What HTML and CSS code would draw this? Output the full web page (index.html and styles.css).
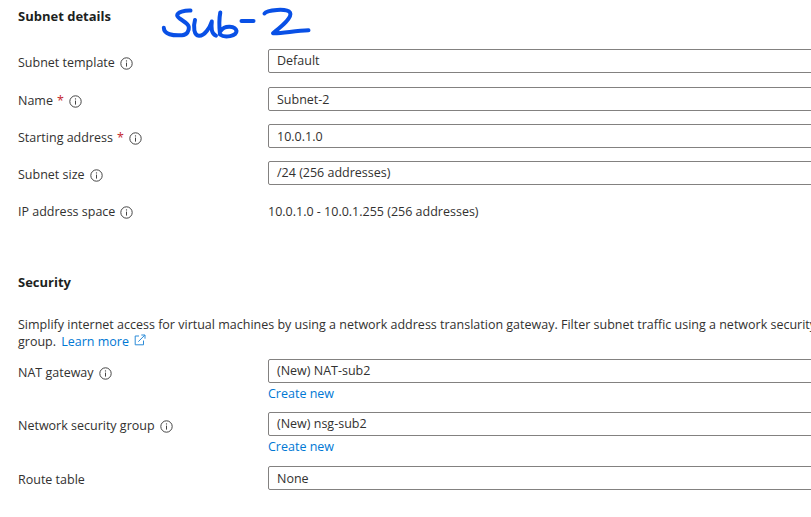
FILE: index.html
```html
<!DOCTYPE html>
<html lang="en">
<head>
<meta charset="utf-8">
<title>Subnet details</title>
<link rel="stylesheet" href="styles.css">
</head>
<body>
<svg class="defs" aria-hidden="true">
  <symbol id="info" viewBox="0 0 13 13">
    <circle cx="6.5" cy="6.5" r="5.7" fill="none" stroke="#444" stroke-width="1"/>
    <path d="M6.5 5.6V9.6" stroke="#444" stroke-width="1"/>
    <circle cx="6.5" cy="3.9" r=".65" fill="#444"/>
  </symbol>
</svg>
<main class="form">
  <header class="title">
    <h2 class="heading w-details">Subnet details</h2>
    <svg class="note" viewBox="0 0 160 40" aria-hidden="true">
      <path d="M31.5 10.6C26 10.4 18 12 18.2 15.5C18.5 19 29 22 29.8 27C30.3 31 28 35 23 35.2C14 35.8 5 34.5 4.8 27.7"/>
      <path d="M36 20C34 27 35 35.5 40 35.8C46 36 51 27 52.8 21.5C52 28 52 34 57 35.6"/>
      <path d="M61.3 12.5C60 19 60.3 28 61 34.5C66 38.5 77.5 36 77.5 31C76.500 26 66 24.500 61.500 31"/>
      <path d="M82.500 21H94.500"/>
      <path d="M105.500 13.500C108 9.800 128 8 131 12.500C134 18 119 29 114 33.200C124 33.500 136 30.500 149.500 30.300"/>
    </svg>
  </header>
  <div class="row first"><label class="label"><span class="w-template">Subnet template</span><svg class="info"><use href="#info"/></svg></label><div class="field up"><span class="w-default">Default</span></div></div>
  <div class="row name"><label class="label"><span class="w-name">Name</span><b class="req">*</b><svg class="info"><use href="#info"/></svg></label><div class="field"><span class="w-subnet">Subnet-2</span></div></div>
  <div class="row"><label class="label"><span class="w-start">Starting address</span><b class="req">*</b><svg class="info"><use href="#info"/></svg></label><div class="field"><span class="w-ip">10.0.1.0</span></div></div>
  <div class="row"><label class="label"><span class="w-size">Subnet size</span><svg class="info"><use href="#info"/></svg></label><div class="field up"><span class="w-mask">/24 (256 addresses)</span></div></div>
  <div class="row"><label class="label"><span class="w-space">IP address space</span><svg class="info"><use href="#info"/></svg></label><div class="value"><span class="w-range">10.0.1.0 - 10.0.1.255 (256 addresses)</span></div></div>
  <h2 class="heading security w-security">Security</h2>
  <p class="intro"><span class="w-intro">Simplify internet access for virtual machines by using a network address translation gateway. Filter subnet traffic using a network security</span><br><span class="w-group">group.</span> <a class="link w-learn">Learn more</a><svg class="ext" viewBox="0 0 12 12"><path d="M5 2H1.200V10.800H9.500V6.500M4.300 7.700L10.700 1.200M7.300 1H11V4.700"/></svg></p>
  <div class="row nat"><label class="label"><span class="w-nat">NAT gateway</span><svg class="info"><use href="#info"/></svg></label><div class="field up"><span class="w-natv">(New) NAT-sub2</span></div></div>
  <a class="link create"><span class="w-create">Create new</span></a>
  <div class="row nsg"><label class="label"><span class="w-nsg">Network security group</span><svg class="info"><use href="#info"/></svg></label><div class="field up"><span class="w-nsgv">(New) nsg-sub2</span></div></div>
  <a class="link create"><span class="w-create">Create new</span></a>
  <div class="row route"><label class="label"><span class="w-route">Route table</span></label><div class="field"><span class="w-none">None</span></div></div>
</main>
</body>
</html>
```
FILE: styles.css
```css
* { box-sizing: border-box; }
body {
  margin: 0;
  overflow: hidden;
  background: #fff;
  color: #323130;
  font: 12.5px/17px "Open Sans", "Noto Sans", sans-serif;
  white-space: nowrap;
}
.defs { position: absolute; width: 0; height: 0; }
.form { padding-left: 18px; width: 830px; }
.title { display: flex; height: 40px; }
.heading { margin: 0; font-size: 13px; line-height: 17px; font-weight: 700; color: #201f1e; }
.title .heading { width: 141px; padding-top: 8px; }
.note { width: 160px; height: 40px; fill: none; stroke: #0950e6; stroke-width: 4; stroke-linecap: round; stroke-linejoin: round; }
.row { display: grid; grid-template-columns: 250px 1fr; height: 24px; margin-top: 13px; }
.first { margin-top: 9px; }
.name { margin-top: 14px; }
.label { display: flex; align-items: center; padding-top: 2px; }
.info { width: 13px; height: 13px; margin: 2px 0 0 5px; }
.req { margin-left: 4px; color: #c4262e; font-weight: 400; }
.field { border: 1px solid #838180; border-radius: 2px; padding: 3px 8px 0; line-height: 18px; }
.up { padding-top: 2px; }
.value { padding-top: 5px; }
.security { margin-top: 52px; }
.intro { margin: 25px 0 0; }
.link { color: #0078d4; }
.intro .link { margin-left: 2px; }
.ext { width: 12px; height: 12px; margin-left: 5px; fill: none; stroke: #2b8bd8; stroke-width: 1; }
.nat { margin-top: 9px; }
.create { display: block; margin: 2px 0 0 250px; }
.nsg { margin-top: 10px; }
.route { margin-top: 11px; }
```
